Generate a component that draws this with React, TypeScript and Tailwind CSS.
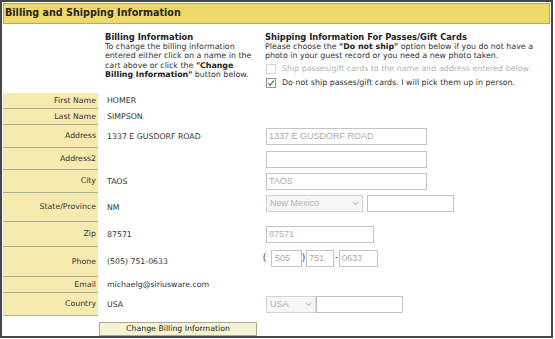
import React from 'react';

const rows = [
  { label: 'First Name', value: 'HOMER', h: 'h-[16px]', ship: null },
  { label: 'Last Name', value: 'SIMPSON', h: 'h-[16px]', ship: null },
  { label: 'Address', value: '1337 E GUSDORF ROAD', h: 'h-[23px]', ship: 'address' },
  { label: 'Address2', value: '', h: 'h-[22px]', ship: 'address2' },
  { label: 'City', value: 'TAOS', h: 'h-[23px]', ship: 'city' },
  { label: 'State/Province', value: 'NM', h: 'h-[29px]', ship: 'state' },
  { label: 'Zip', value: '87571', h: 'h-[25px]', ship: 'zip' },
  { label: 'Phone', value: '(505) 751-0633', h: 'h-[30px]', ship: 'phone' },
  { label: 'Email', value: 'michaelg@siriusware.com', h: 'h-[16px]', ship: null },
  { label: 'Country', value: 'USA', h: 'h-[23px]', ship: 'country' },
];

const Field = ({ value, className }: { value?: string; className: string }) => (
  <div
    className={`h-[17px] border border-[#c4c4c4] bg-white px-[2px] flex items-center text-[9px] text-[#ababab] font-['Liberation_Sans',sans-serif] leading-none ${className}`}
  >
    {value}
  </div>
);

const Select = ({ value, className }: { value: string; className: string }) => (
  <div
    className={`h-[17px] border border-[#d2d2d2] bg-[#f6f6f4] pl-[3px] flex items-center justify-between text-[9px] text-[#b3b3b3] font-['Liberation_Sans',sans-serif] leading-none ${className}`}
  >
    <span>{value}</span>
    <span className="w-[11px] h-[13px] mr-px flex items-center justify-center">
      <svg width="7" height="5" viewBox="0 0 7 5">
        <path d="M1 1 L3.5 3.5 L6 1" fill="none" stroke="#c4c4c4" strokeWidth="1.2" />
      </svg>
    </span>
  </div>
);

const ShipCell = ({ kind }: { kind: string | null }) => {
  if (kind === 'address') return <Field value="1337 E GUSDORF ROAD" className="w-[161px] ml-[3px]" />;
  if (kind === 'address2') return <Field className="w-[161px] ml-[3px]" />;
  if (kind === 'city') return <Field value="TAOS" className="w-[161px] ml-[3px]" />;
  if (kind === 'zip') return <Field value="87571" className="w-[108px] ml-[3px]" />;
  if (kind === 'state')
    return (
      <div className="flex items-center gap-[4px] ml-[3px] mb-[8px]">
        <Select value="New Mexico" className="w-[97px]" />
        <Field className="w-[87px]" />
      </div>
    );
  if (kind === 'country')
    return (
      <div className="flex items-center ml-[3px]">
        <Select value="USA" className="w-[50px]" />
        <Field className="w-[87px]" />
      </div>
    );
  if (kind === 'phone')
    return (
      <div className="flex items-center mb-[8px] text-[9px] text-[#333] font-['Liberation_Sans',sans-serif]">
        <span className="w-[8px]">(</span>
        <Field value="505" className="w-[31px] pl-[3px]" />
        <span className="w-[4px]">)</span>
        <Field value="751" className="w-[28px] pl-[2px]" />
        <span className="w-[5px] pl-px">-</span>
        <Field value="0633" className="w-[39px] pl-[2px]" />
      </div>
    );
  return null;
};

export default function App() {
  return (
    <div className="w-[555px] h-[339px] bg-white font-['DejaVu_Sans',Verdana,sans-serif] text-[#333]">
      <div className="w-[553px] h-[338px] border-2 border-[#474747] p-px flex flex-col">
        <div className="h-[21px] shrink-0 border border-[#b9a85c] bg-[#efd96c] flex items-center pl-px">
          <span className="text-[9.6px] font-bold text-[#262626]">Billing and Shipping Information</span>
        </div>

        <div className="h-[69px] shrink-0 flex text-[7.9px] leading-[9.2px]">
          <div className="w-[95px]" />
          <div className="w-[165px] pl-[7px] pt-[9px]">
            <div className="font-bold text-[8.4px] text-[#222]">Billing Information</div>
            <div>
              To change the billing information
              <br />
              entered either click on a name in the
              <br />
              cart above or click the <b className="text-[#222]">"Change</b>
              <br />
              <b className="text-[#222]">Billing Information"</b> button below.
            </div>
          </div>
          <div className="flex-1 pl-[2px] pt-[9px]">
            <div className="font-bold text-[8.3px] text-[#222]">Shipping Information For Passes/Gift Cards</div>
            <div>
              Please choose the <b className="text-[#222]">"Do not ship"</b> option below if you do not have a
              <br />
              photo in your guest record or you need a new photo taken.
            </div>
            <div className="flex items-center gap-[6px] mt-[3px] ml-px">
              <span className="w-[10px] h-[10px] border border-[#d6d6d6] bg-white" />
              <span className="text-[#b4b4b4]">Ship passes/gift cards to the name and address entered below.</span>
            </div>
            <div className="flex items-center gap-[6px] mt-[4px] ml-px">
              <span className="w-[10px] h-[10px] border border-[#8e9a8a] bg-white flex items-center justify-center">
                <svg width="8" height="8" viewBox="0 0 8 8">
                  <path d="M1.2 4.2 L3.2 6.2 L6.8 1.6" fill="none" stroke="#3f9a3a" strokeWidth="1.4" />
                </svg>
              </span>
              <span>Do not ship passes/gift cards. I will pick them up in person.</span>
            </div>
          </div>
        </div>

        <div className="flex flex-col text-[7.8px]">
          {rows.map((r) => (
            <div key={r.label} className={`flex ${r.h}`}>
              <div className="w-[95px] bg-[#f6eaae] border-b border-[#a6ae96] flex items-center justify-end pr-[2px]">
                {r.label}
              </div>
              <div className="w-[165px] pl-[9px] flex items-center">{r.value}</div>
              <div className="flex-1 flex items-center">
                <ShipCell kind={r.ship} />
              </div>
            </div>
          ))}
        </div>

        <div className="flex pt-[6px]">
          <div className="w-[96px]" />
          <button className="w-[158px] h-[14px] border border-[#a3ac93] bg-[#f6f3d4] text-[7.8px] leading-none text-[#262626] flex items-center justify-center">
            Change Billing Information
          </button>
        </div>
      </div>
    </div>
  );
}
